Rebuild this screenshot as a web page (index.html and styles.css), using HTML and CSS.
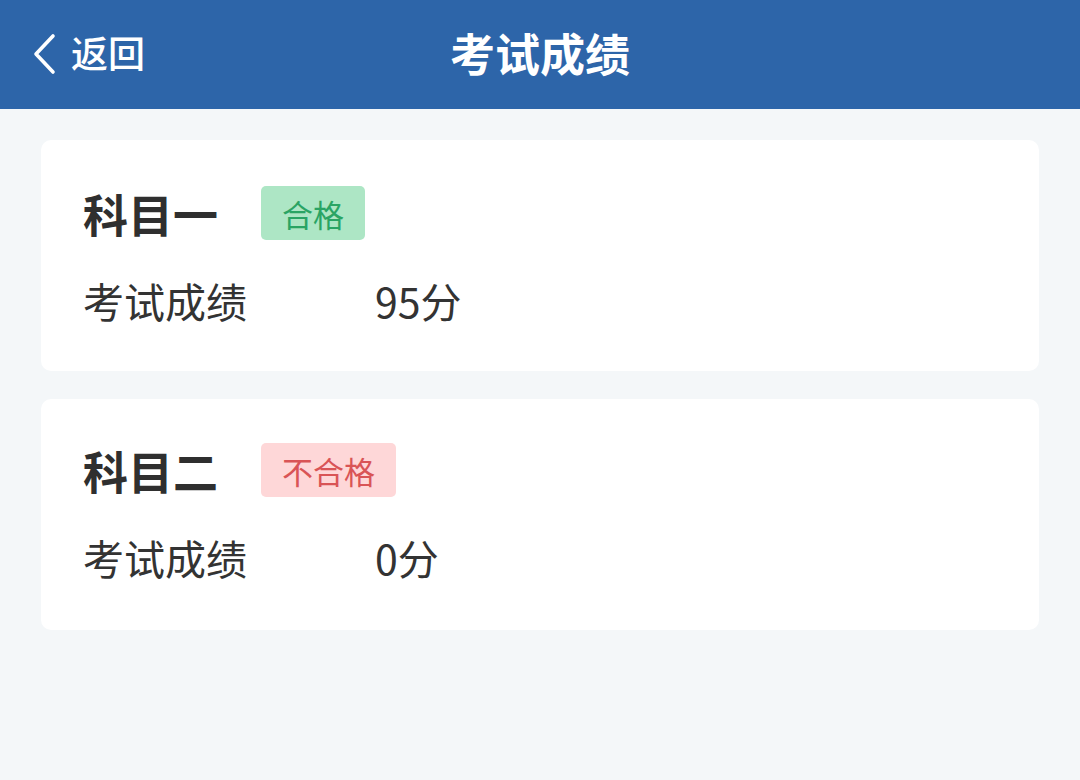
FILE: index.html
```html
<!DOCTYPE html>
<html lang="zh">
<head>
<meta charset="utf-8">
<link rel="stylesheet" href="styles.css">
</head>
<body>
<header class="topbar">
  <div class="back">
    <svg class="chev" width="26" height="42" viewBox="0 0 26 42"><path d="M22 3 L5 21 L22 39" fill="none" stroke="#fff" stroke-width="3.6" stroke-linecap="round" stroke-linejoin="round"/></svg>
    <span class="back-text">返回</span>
  </div>
  <h1 class="title">考试成绩</h1>
</header>
<main class="content">
  <section class="card">
    <div class="card-head">
      <span class="subject">科目一</span>
      <span class="badge pass">合格</span>
    </div>
    <div class="row">
      <span class="label">考试成绩</span>
      <span class="value">95分</span>
    </div>
  </section>
  <section class="card card-second">
    <div class="card-head">
      <span class="subject">科目二</span>
      <span class="badge fail">不合格</span>
    </div>
    <div class="row">
      <span class="label">考试成绩</span>
      <span class="value">0分</span>
    </div>
  </section>
</main>
</body>
</html>
```
FILE: styles.css
```css
* { box-sizing: border-box; }
html, body { margin: 0; padding: 0; }
body {
  width: 1080px;
  height: 780px;
  background: #f4f7f9;
  font-family: "Noto Sans CJK SC", "Noto Sans", sans-serif;
  color: #333;
  overflow: hidden;
}
.topbar {
  height: 109px;
  background: #2d65a9;
  display: flex;
  align-items: center;
  justify-content: center;
  position: relative;
}
.back {
  position: absolute;
  left: 31px;
  top: 0;
  height: 109px;
  display: flex;
  align-items: center;
  gap: 14px;
  color: #fff;
}
.chev { display: block; margin-top: -2px; }
.back-text {
  font-size: 37px;
  line-height: 1;
  font-weight: 500;
  margin-top: -4px;
}
.title {
  margin: 0;
  font-size: 45px;
  font-weight: 700;
  color: #fff;
  line-height: 1;
  margin-top: -4px;
}
.content {
  padding: 31px 41px 0 41px;
  display: flex;
  flex-direction: column;
  gap: 28px;
}
.card {
  background: #fff;
  border-radius: 10px;
  padding: 46px 42px 42px 42px;
  height: 231px;
}
.card-second { padding-top: 44px; }
.card-head {
  display: flex;
  align-items: center;
  gap: 43px;
  height: 54px;
}
.subject {
  font-size: 45px;
  font-weight: 700;
  color: #2f2f2f;
  line-height: 1;
}
.badge {
  height: 54px;
  display: flex;
  align-items: center;
  padding: 0 21px;
  border-radius: 5px;
  font-size: 31px;
  line-height: 1;
}
.badge.pass { background: #ade6c5; color: #2aa464; }
.badge.fail { background: #fed7d8; color: #d95456; }
.row {
  margin-top: 36px;
  display: flex;
  align-items: center;
  height: 48px;
  font-size: 41px;
  color: #333;
}
.label { width: 292px; }
```
